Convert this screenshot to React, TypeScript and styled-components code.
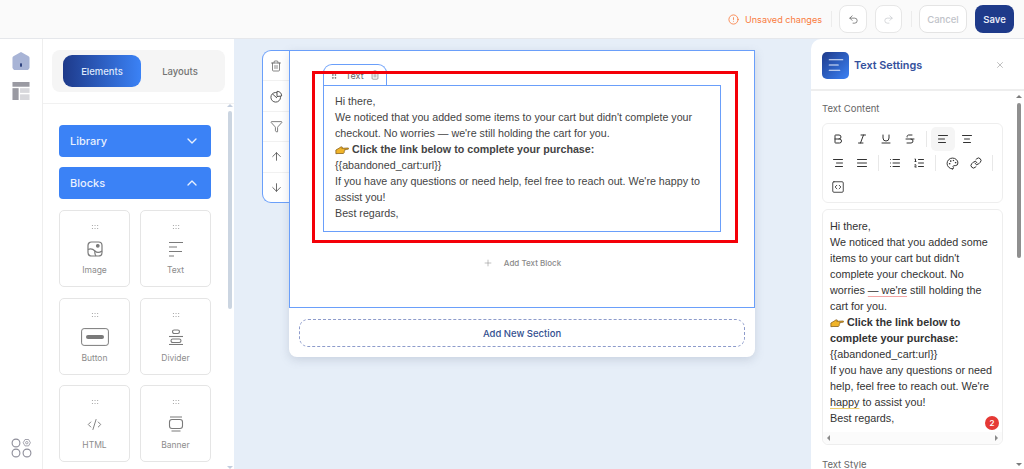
import React from "react";
import styled, { createGlobalStyle } from "styled-components";
import {
  AlignCenter,
  AlignJustify,
  AlignLeft,
  AlignRight,
  ArrowDown,
  ArrowUp,
  Bold,
  ChevronDown,
  ChevronUp,
  CircleAlert,
  CodeXml,
  Funnel,
  GripVertical,
  Italic,
  Link,
  List,
  ListOrdered,
  Palette,
  Plus,
  Redo2,
  SquareCode,
  Strikethrough,
  Trash2,
  Underline,
  Undo2,
  X,
} from "lucide-react";

const GlobalStyle = createGlobalStyle`
  html, body {
    margin: 0;
    padding: 0;
    width: 1024px;
    height: 469px;
    overflow: hidden;
    font-family: Inter, "Noto Sans", sans-serif;
    background: #fff;
  }
  * { box-sizing: border-box; }
`;

const Page = styled.div`
  width: 1024px;
  height: 469px;
  display: flex;
  flex-direction: column;
  overflow: hidden;
`;

// top bar
const TopBar = styled.header`
  height: 39px;
  flex: none;
  display: flex;
  align-items: center;
  justify-content: flex-end;
  padding: 0 10px 0 0;
  background: #fafafa;
  border-bottom: 1px solid #e5e7eb;
`;

const Unsaved = styled.span`
  display: flex;
  align-items: center;
  gap: 6px;
  font-size: 9.1px;
  color: #f97b3d;
`;

const BarDivider = styled.span`
  width: 1px;
  height: 16px;
  background: #ececec;
  margin: 0 7px 0 9px;
`;

const HistoryButton = styled.button<{ $off?: boolean }>`
  width: ${(p) => (p.$off ? "27px" : "28px")};
  height: 28px;
  margin-right: ${(p) => (p.$off ? 0 : "8px")};
  padding: 0;
  display: flex;
  align-items: center;
  justify-content: center;
  background: #fff;
  border: 1px solid #e7e7e7;
  border-radius: 8px;
  color: ${(p) => (p.$off ? "#c4c7cc" : "#555")};
`;

const CancelButton = styled.button`
  width: 48px;
  height: 28px;
  margin-right: 8px;
  padding: 0;
  background: #fff;
  border: 1px solid #e4e4e4;
  border-radius: 8px;
  font: 500 9.5px Inter, sans-serif;
  color: #bfc3c9;
`;

const SaveButton = styled.button`
  width: 39px;
  height: 28px;
  padding: 0;
  background: #1e3a8a;
  border: none;
  border-radius: 8px;
  font: 600 9.5px Inter, sans-serif;
  color: #e6ebf7;
`;

const Workspace = styled.div`
  flex: 1;
  min-height: 0;
  display: flex;
  background: #e6eef8;
`;

// far left rail
const Rail = styled.nav`
  width: 43px;
  flex: none;
  display: flex;
  flex-direction: column;
  align-items: center;
  padding: 13px 0 11px;
  gap: 12px;
  background: #fff;
  border-right: 1px solid #eeeeee;
`;

const RailBottom = styled.div`
  margin-top: auto;
  line-height: 0;
`;

// elements panel
const ElementsPanel = styled.aside`
  width: 191px;
  flex: none;
  display: flex;
  flex-direction: column;
  background: #fff;
`;

const TabsWrap = styled.div`
  height: 65px;
  flex: none;
  padding: 11px 9px 0 9px;
  border-bottom: 1px solid #f1f1f1;
`;

const Tabs = styled.div`
  height: 42px;
  display: flex;
  align-items: center;
  padding: 0 5px 0 11px;
  background: #f5f5f5;
  border-radius: 8px;
`;

const Tab = styled.div<{ $active?: boolean }>`
  width: 78px;
  height: 32px;
  display: flex;
  align-items: center;
  justify-content: center;
  border-radius: 9px;
  font-size: 9.5px;
  font-weight: 500;
  color: ${(p) => (p.$active ? "#dfe8fb" : "#737373")};
  background: ${(p) => (p.$active ? "linear-gradient(90deg, #1e3a8a, #3b82f6)" : "transparent")};
`;

const ElementsBody = styled.div`
  flex: 1;
  min-height: 0;
  display: flex;
`;

const ElementsList = styled.div`
  width: 184px;
  padding: 21px 16px 0 16px;
  display: flex;
  flex-direction: column;
  gap: 10px;
`;

const AccordionHead = styled.div`
  height: 32px;
  flex: none;
  display: flex;
  align-items: center;
  justify-content: space-between;
  padding: 0 11px;
  background: #3b82f6;
  border-radius: 4px;
  color: #e8f0fe;
  font-size: 11px;
  font-weight: 500;
`;

const BlockGrid = styled.div`
  display: grid;
  grid-template-columns: 71px 71px;
  grid-auto-rows: 77px;
  column-gap: 10px;
  row-gap: 10.5px;
  margin-top: 1px;
`;

const BlockCard = styled.div`
  display: flex;
  flex-direction: column;
  align-items: center;
  padding-top: 13px;
  border: 1px solid #e5e5e5;
  border-radius: 5px;
  background: #fff;
`;

const DragDots = styled.div`
  width: 8px;
  height: 6px;
  background-image: radial-gradient(circle, #9a9a9a 0.65px, transparent 0.8px);
  background-size: 2.7px 3px;
`;

const BlockIcon = styled.div`
  height: 20px;
  margin-top: 9px;
  display: flex;
  align-items: center;
  justify-content: center;
  color: #7a7a7a;
`;

const BlockLabel = styled.span`
  margin-top: 6px;
  font-size: 8.5px;
  color: #8d8d8d;
`;

// native-looking scrollbar, shared by both side panels
const ScrollTrack = styled.div<{ $pushed?: boolean }>`
  width: 6px;
  flex: none;
  position: relative;
  margin-left: ${(p) => (p.$pushed ? "auto" : 0)};
  padding: ${(p) => (p.$pushed ? "4px 0 3px" : 0)};
  display: flex;
  flex-direction: column;
  align-items: center;
  justify-content: space-between;
`;

const ScrollArrow = styled.span<{ $down?: boolean; $dark?: boolean }>`
  width: 0;
  height: 0;
  border-left: 3px solid transparent;
  border-right: 3px solid transparent;
  ${(p) => (p.$down ? "border-top" : "border-bottom")}: 3px solid ${(p) => (p.$dark ? "#7c7c7c" : "#c3cede")};
`;

const ScrollThumb = styled.div<{ $h: number; $top: number; $dark?: boolean }>`
  position: absolute;
  top: ${(p) => p.$top}px;
  left: 1px;
  width: 4px;
  height: ${(p) => p.$h}px;
  border-radius: 2px;
  background: ${(p) => (p.$dark ? "#8f8f8f" : "#cbd5e1")};
`;

// canvas
const Canvas = styled.main`
  flex: 1;
  min-width: 0;
  display: flex;
  align-items: flex-start;
  padding: 11px 0 0 28px;
`;

const SideTools = styled.div`
  width: 27px;
  height: 153px;
  flex: none;
  display: flex;
  flex-direction: column;
  background: #fff;
  border: 1.5px solid #6a9ffa;
  border-right: none;
  border-radius: 9px 0 0 9px;
`;

const SideTool = styled.div`
  flex: 1;
  display: flex;
  align-items: center;
  justify-content: center;
  color: #555;
  & + & {
    border-top: 1px solid #f1f1f1;
  }
`;

const EmailCard = styled.div`
  width: 466px;
  background: #fff;
  border-radius: 0 0 8px 8px;
  box-shadow: 0 3px 10px rgba(100, 116, 139, 0.22);
`;

const Section = styled.section`
  height: 258px;
  padding: 13px 33px 0 33px;
  border: 1.5px solid #6a9ffa;
`;

const BlockTag = styled.div`
  width: 64px;
  height: 21px;
  display: flex;
  align-items: center;
  justify-content: space-between;
  padding: 0 6px 0 5px;
  background: #fff;
  border: 1.5px solid #6a9ffa;
  border-bottom: none;
  border-radius: 9px 9px 0 0;
  font-size: 9px;
  color: #666;
`;

const TextBlock = styled.div`
  height: 147px;
  padding: 7px 11px;
  border: 1.5px solid #6a9ffa;
  font: 10.7px/16px "Liberation Sans", Arial, sans-serif;
  color: #444;
`;

const Strong = styled.strong`
  font-weight: 700;
`;

const Pointer = styled.svg`
  vertical-align: -2px;
  margin-right: 3px;
`;

const AddBlock = styled.div`
  display: flex;
  align-items: center;
  justify-content: center;
  gap: 11px;
  margin-top: 26px;
  font-size: 8px;
  font-weight: 500;
  color: #8a8a8a;
`;

const CardFooter = styled.div`
  padding: 11px 10px 10px;
`;

const AddSection = styled.div`
  height: 28px;
  display: flex;
  align-items: center;
  justify-content: center;
  border: 1px dashed #8d9bcb;
  border-radius: 9px;
  font-size: 9.5px;
  font-weight: 500;
  color: #34508f;
`;

// right settings panel
const SettingsPanel = styled.aside`
  width: 213px;
  flex: none;
  margin-left: auto;
  display: flex;
  flex-direction: column;
  background: #fff;
  border-radius: 10px 0 0 0;
  overflow: hidden;
`;

const SettingsHead = styled.div`
  height: 52px;
  flex: none;
  display: flex;
  align-items: center;
  gap: 5px;
  padding: 2px 19px 0 11px;
  border-bottom: 2px solid #eeeeee;
`;

const SettingsIcon = styled.div`
  width: 27px;
  height: 27px;
  display: flex;
  align-items: center;
  justify-content: center;
  border-radius: 5px;
  color: #e3ebfb;
  background: linear-gradient(135deg, #1e3a8a, #3b82f6);
`;

const SettingsTitle = styled.h2`
  flex: 1;
  margin: 0;
  font-size: 10.8px;
  font-weight: 600;
  color: #34509c;
`;

const SettingsBody = styled.div`
  flex: 1;
  min-height: 0;
  display: flex;
  padding-right: 2px;
`;

const SettingsColumn = styled.div`
  width: 192px;
  padding: 11px 0 0 11px;
  overflow: hidden;
`;

const FieldLabel = styled.div`
  font-size: 9.5px;
  line-height: 14px;
  color: #666;
`;

const EditorTools = styled.div`
  width: 181px;
  height: 80px;
  margin-top: 7px;
  padding: 3px;
  display: flex;
  flex-wrap: wrap;
  align-content: flex-start;
  border: 1px solid #eeeeee;
  border-radius: 6px;
`;

const ToolButton = styled.div<{ $active?: boolean }>`
  width: 24px;
  height: 24px;
  display: flex;
  align-items: center;
  justify-content: center;
  border-radius: 5px;
  color: #333;
  background: ${(p) => (p.$active ? "#f5f5f5" : "transparent")};
`;

const ToolSep = styled.span`
  width: 1px;
  height: 16px;
  margin: 4px 4px;
  background: #e8e8e8;
`;

const EditorBox = styled.div`
  width: 181px;
  height: 236px;
  margin-top: 6px;
  position: relative;
  padding: 8px 7px 0;
  border: 1px solid #eeeeee;
  border-radius: 6px;
  font: 10.8px/16px "Liberation Sans", Arial, sans-serif;
  color: #333;
`;

const Squiggle = styled.span<{ $color: string }>`
  text-decoration: underline;
  text-decoration-color: ${(p) => p.$color};
  text-underline-offset: 2px;
`;

const EditorScroll = styled.div`
  position: absolute;
  left: 0;
  right: 0;
  bottom: 0;
  height: 12px;
  display: flex;
  align-items: center;
  justify-content: space-between;
  padding: 0 4px;
  background: #fbfbfb;
  border-radius: 0 0 6px 6px;
`;

const HArrow = styled.span<{ $right?: boolean }>`
  width: 0;
  height: 0;
  border-top: 3px solid transparent;
  border-bottom: 3px solid transparent;
  ${(p) => (p.$right ? "border-left" : "border-right")}: 3px solid #8a8a8a;
`;

const ErrorBadge = styled.span`
  position: absolute;
  right: 3px;
  bottom: 14px;
  width: 14px;
  height: 14px;
  display: flex;
  align-items: center;
  justify-content: center;
  border-radius: 50%;
  background: #e53935;
  color: #fff;
  font: 600 8px Inter, sans-serif;
`;

const StyleLabel = styled(FieldLabel)`
  margin-top: 13px;
`;

// the red annotation drawn over the screenshot
const Annotation = styled.div`
  position: absolute;
  left: 312px;
  top: 71px;
  width: 426px;
  height: 172px;
  border: 3px solid #f40008;
  pointer-events: none;
`;

const HandIcon = () => (
  <Pointer width="14" height="10" viewBox="0 0 16 11">
    <path
      d="M1 5.500 4.500 3.500 7 1.800 8.500 2.400 7.800 3.600 15 3.200c.9.100.9 1.300 0 1.400l-4 .4.200 1.100-.6 1 .1 1-.8.800-.3.6H3.500L1 9.700z"
      fill="#f0b429"
      stroke="#7a5210"
      strokeWidth="0.8"
      strokeLinejoin="round"
    />
  </Pointer>
);

const HomeIcon = () => (
  <svg width="18" height="18" viewBox="0 0 18 19">
    <path d="M9 0 17 4.500c.7.400 1 1 1 1.800V16c0 1.700-1.300 3-3 3H3c-1.700 0-3-1.300-3-3V6.300c0-.8.300-1.400 1-1.800z" fill="#a8b4d6" />
    <rect x="8" y="12" width="2" height="3.500" fill="#2c3f7c" />
  </svg>
);

const LayoutIcon = () => (
  <svg width="18" height="18" viewBox="0 0 18 19">
    <rect width="18" height="5" fill="#9a9aa2" />
    <rect y="6.500" width="6.500" height="12.500" fill="#9a9aa2" />
    <rect x="8" y="6.500" width="10" height="5" fill="#d8d8dc" />
    <rect x="8" y="13" width="10" height="6" fill="#d8d8dc" />
  </svg>
);

const AppsIcon = () => (
  <svg width="21" height="20" viewBox="0 0 21 20" fill="none" stroke="#8d8d99" strokeWidth="1.100">
    <circle cx="5" cy="5" r="3.900" />
    <circle cx="5" cy="15" r="3.900" />
    <circle cx="16" cy="15" r="3.900" />
    <path d="M14 1.500h3.600l1.800 3.200-1.800 3.200H14l-1.800-3.200z" strokeWidth="0.8" />
    <circle cx="15.800" cy="4.700" r="1.200" strokeWidth="0.8" />
  </svg>
);

const ImageIcon = () => (
  <svg width="16" height="16" viewBox="0 0 16 16" fill="none" stroke="currentColor" strokeWidth="1.200">
    <rect x="1" y="1" width="14" height="14" rx="3.500" />
    <circle cx="10.800" cy="4.800" r="1.300" fill="currentColor" />
    <path d="M1 8.500c3-1.500 5-.5 7 1.500s4 2 7 0" />
    <path d="M8 10c-.5 2 0 3.500 1 5" />
  </svg>
);

const TextLinesIcon = () => (
  <svg width="16" height="16" viewBox="0 0 16 16" fill="none" stroke="currentColor" strokeWidth="1.100">
    <path d="M1 1.500h14M1 6h8M1 10.500h13M1 15h5" />
  </svg>
);

const ButtonIcon = () => (
  <svg width="28" height="18" viewBox="0 0 28 18" fill="none">
    <rect x="0.600" y="0.600" width="26.800" height="16.800" rx="2.500" stroke="currentColor" strokeWidth="1" />
    <rect x="5" y="7" width="18" height="4" rx="2" fill="currentColor" />
  </svg>
);

const DividerIcon = () => (
  <svg width="16" height="16" viewBox="0 0 16 16" fill="none" stroke="currentColor" strokeWidth="1.100">
    <rect x="4.500" y="1" width="7" height="3.500" rx="1.700" />
    <path d="M1 7.500h14" />
    <rect x="3" y="10" width="10" height="3.500" rx="1.700" />
    <path d="M1 15.500h14" />
  </svg>
);

const BannerIcon = () => (
  <svg width="16" height="16" viewBox="0 0 16 16" fill="none" stroke="currentColor" strokeWidth="1.100">
    <path d="M2 1h12M3.500 15h9" />
    <rect x="1.500" y="3.500" width="13" height="9" rx="2.500" />
  </svg>
);

const PieIcon = () => (
  <svg width="13" height="13" viewBox="0 0 13 13" fill="none" stroke="currentColor" strokeWidth="1">
    <circle cx="5.700" cy="7.300" r="4.800" />
    <path d="M7 1.300a5 5 0 0 1 4.700 4.700L7 6.500z" fill="#fff" />
    <path d="M2.500 4 7 8" />
  </svg>
);

const blocks = [
  { label: "Image", icon: <ImageIcon /> },
  { label: "Text", icon: <TextLinesIcon /> },
  { label: "Button", icon: <ButtonIcon /> },
  { label: "Divider", icon: <DividerIcon /> },
  { label: "HTML", icon: <CodeXml size={15} strokeWidth={1.5} /> },
  { label: "Banner", icon: <BannerIcon /> },
];

const App = () => {
  return (
    <Page>
      <GlobalStyle />
      <TopBar>
        <Unsaved>
          <CircleAlert size={11} strokeWidth={1.8} />
          Unsaved changes
        </Unsaved>
        <BarDivider />
        <HistoryButton>
          <Undo2 size={11} strokeWidth={1.5} />
        </HistoryButton>
        <HistoryButton $off>
          <Redo2 size={11} strokeWidth={1.5} />
        </HistoryButton>
        <BarDivider />
        <CancelButton>Cancel</CancelButton>
        <SaveButton>Save</SaveButton>
      </TopBar>

      <Workspace>
        <Rail>
          <HomeIcon />
          <LayoutIcon />
          <RailBottom>
            <AppsIcon />
          </RailBottom>
        </Rail>

        <ElementsPanel>
          <TabsWrap>
            <Tabs>
              <Tab $active>Elements</Tab>
              <Tab>Layouts</Tab>
            </Tabs>
          </TabsWrap>
          <ElementsBody>
            <ElementsList>
              <AccordionHead>
                Library
                <ChevronDown size={16} strokeWidth={2} />
              </AccordionHead>
              <AccordionHead>
                Blocks
                <ChevronUp size={16} strokeWidth={2} />
              </AccordionHead>
              <BlockGrid>
                {blocks.map((block) => (
                  <BlockCard key={block.label}>
                    <DragDots />
                    <BlockIcon>{block.icon}</BlockIcon>
                    <BlockLabel>{block.label}</BlockLabel>
                  </BlockCard>
                ))}
              </BlockGrid>
            </ElementsList>
            <ScrollTrack>
              <ScrollArrow />
              <ScrollThumb $h={198} $top={7} />
              <ScrollArrow $down />
            </ScrollTrack>
          </ElementsBody>
        </ElementsPanel>

        <Canvas>
          <SideTools>
            <SideTool><Trash2 size={12} strokeWidth={1.4} /></SideTool>
            <SideTool><PieIcon /></SideTool>
            <SideTool><Funnel size={13} strokeWidth={1.4} /></SideTool>
            <SideTool><ArrowUp size={13} strokeWidth={1.6} /></SideTool>
            <SideTool><ArrowDown size={13} strokeWidth={1.6} /></SideTool>
          </SideTools>
          <EmailCard>
            <Section>
              <BlockTag>
                <GripVertical size={10} strokeWidth={1.8} />
                Text
                <Trash2 size={10} strokeWidth={1.5} />
              </BlockTag>
              <TextBlock>
                Hi there,
                <br />
                We noticed that you added some items to your cart but didn't complete your checkout. No worries — we're still holding the cart for you.
                <br />
                <HandIcon />
                <Strong>Click the link below to complete your purchase:</Strong>
                <br />
                {"{{abandoned_cart:url}}"}
                <br />
                If you have any questions or need help, feel free to reach out. We're happy to assist you!
                <br />
                Best regards,
              </TextBlock>
              <AddBlock>
                <Plus size={10} strokeWidth={1.3} />
                Add Text Block
              </AddBlock>
            </Section>
            <CardFooter>
              <AddSection>Add New Section</AddSection>
            </CardFooter>
          </EmailCard>
        </Canvas>

        <SettingsPanel>
          <SettingsHead>
            <SettingsIcon>
              <AlignLeft size={18} strokeWidth={1.5} />
            </SettingsIcon>
            <SettingsTitle>Text Settings</SettingsTitle>
            <X size={10} color="#9a9a9a" strokeWidth={1.5} />
          </SettingsHead>
          <SettingsBody>
            <SettingsColumn>
              <FieldLabel>Text Content</FieldLabel>
              <EditorTools>
                <ToolButton><Bold size={12} strokeWidth={2} /></ToolButton>
                <ToolButton><Italic size={12} strokeWidth={2} /></ToolButton>
                <ToolButton><Underline size={12} strokeWidth={2} /></ToolButton>
                <ToolButton><Strikethrough size={12} strokeWidth={2} /></ToolButton>
                <ToolSep />
                <ToolButton $active><AlignLeft size={12} strokeWidth={2} /></ToolButton>
                <ToolButton><AlignCenter size={12} strokeWidth={2} /></ToolButton>
                <ToolButton><AlignRight size={12} strokeWidth={2} /></ToolButton>
                <ToolButton><AlignJustify size={12} strokeWidth={2} /></ToolButton>
                <ToolSep />
                <ToolButton><List size={12} strokeWidth={2} /></ToolButton>
                <ToolButton><ListOrdered size={12} strokeWidth={2} /></ToolButton>
                <ToolSep />
                <ToolButton><Palette size={13} strokeWidth={1.8} /></ToolButton>
                <ToolButton><Link size={12} strokeWidth={2} /></ToolButton>
                <ToolSep />
                <ToolButton><SquareCode size={14} strokeWidth={1.5} /></ToolButton>
              </EditorTools>
              <EditorBox>
                Hi there,
                <br />
                We noticed that you added some items to your cart but didn't complete your checkout. No worries <Squiggle $color="#f3a6a6">— we're</Squiggle> still holding the cart for you.
                <br />
                <HandIcon />
                <Strong>Click the link below to complete your purchase:</Strong>
                <br />
                {"{{abandoned_cart:url}}"}
                <br />
                If you have any questions or need help, feel free to reach out. We're <Squiggle $color="#efd070">happy</Squiggle> to assist you!
                <br />
                Best regards,
                <ErrorBadge>2</ErrorBadge>
                <EditorScroll>
                  <HArrow />
                  <HArrow $right />
                </EditorScroll>
              </EditorBox>
              <StyleLabel>Text Style</StyleLabel>
            </SettingsColumn>
            <ScrollTrack $pushed>
              <ScrollArrow $dark />
              <ScrollThumb $h={155} $top={12} $dark />
              <ScrollArrow $down $dark />
            </ScrollTrack>
          </SettingsBody>
        </SettingsPanel>
      </Workspace>
      <Annotation />
    </Page>
  );
};

export default App;
